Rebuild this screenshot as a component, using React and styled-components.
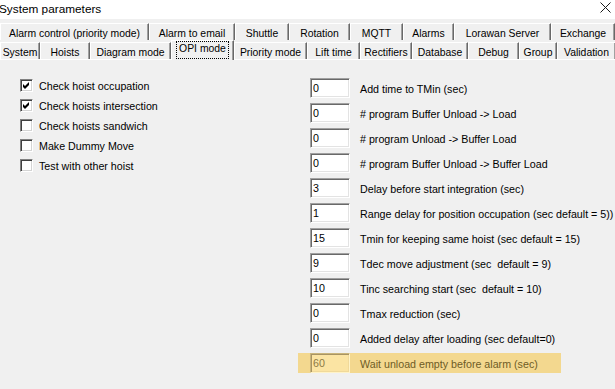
import React from "react"
import styled, { createGlobalStyle } from "styled-components"

const GlobalStyle = createGlobalStyle`
  html, body {
    margin: 0;
    padding: 0;
    background: #f0f0f0;
  }
  body {
    font-family: "Liberation Sans", Arial, sans-serif;
    font-size: 10.7px;
    color: #000;
  }
`

const topTabs = [
  ["Alarm control (priority mode)", 149],
  ["Alarm to email", 86],
  ["Shuttle", 54],
  ["Rotation", 61],
  ["MQTT", 53],
  ["Alarms", 51],
  ["Lorawan Server", 97],
  ["Exchange", 64],
]

const bottomTabs = [
  ["System", 40],
  ["Hoists", 50],
  ["Diagram mode", 81],
  ["OPI mode", 63, true],
  ["Priority mode", 73],
  ["Lift time", 53],
  ["Rectifiers", 52],
  ["Database", 56],
  ["Debug", 51],
  ["Group", 38],
  ["Validation", 59],
]

const checks = [
  ["Check hoist occupation", true],
  ["Check hoists intersection", true],
  ["Check hoists sandwich", false],
  ["Make Dummy Move", false],
  ["Test with other hoist", false],
]

const fields = [
  ["0", "Add time to TMin (sec)"],
  ["0", "# program Buffer Unload -> Load"],
  ["0", "# program Unload -> Buffer Load"],
  ["0", "# program Buffer Unload -> Buffer Load"],
  ["3", "Delay before start integration (sec)"],
  ["1", "Range delay for position occupation (sec default = 5))"],
  ["15", "Tmin for keeping same hoist (sec default = 15)"],
  ["9", "Tdec move adjustment (sec  default = 9)"],
  ["10", "Tinc searching start (sec  default = 10)"],
  ["0", "Tmax reduction (sec)"],
  ["0", "Added delay after loading (sec default=0)"],
  ["60", "Wait unload empty before alarm (sec)", true],
]

class App extends React.Component {
  render() {
    return (
      <Window>
        <GlobalStyle />
        <TitleBar>
          <Title>System parameters</Title>
          <Close width="11" height="11" viewBox="0 0 11 11">
            <path d="M0.5 0.5 L10.5 10.5 M10.5 0.5 L0.5 10.5" stroke="#1a1a1a" strokeWidth="1" fill="none" />
          </Close>
        </TitleBar>

        <TabStrip>
          <TabRow>
            {topTabs.map(([label, w]) => (
              <Tab key={label} w={w}>{label}</Tab>
            ))}
          </TabRow>
          <TabRow $bottom>
            {bottomTabs.map(([label, w, active]) => (
              <Tab key={label} w={w} $active={active}>
                {active ? <Focus>{label}</Focus> : label}
              </Tab>
            ))}
          </TabRow>
        </TabStrip>

        <Content>
          <Options>
            {checks.map(([label, on]) => (
              <CheckRow key={label}>
                <Box>
                  {on && (
                    <svg width="11" height="11" viewBox="0 0 11 11">
                      <path d="M2 4 L4 6 L8 2 L8 5 L4 9 L2 7 Z" fill="#000" />
                    </svg>
                  )}
                </Box>
                {label}
              </CheckRow>
            ))}
          </Options>

          <Fields>
            {fields.map(([value, label, hl]) => (
              <FieldRow key={label} $highlight={hl}>
                <Edit readOnly value={value} $highlight={hl} />
                <FieldLabel $highlight={hl}>{label}</FieldLabel>
              </FieldRow>
            ))}
          </Fields>
        </Content>
      </Window>
    )
  }
}

export default App

const Window = styled.div`
  width: 615px;
  height: 389px;
  overflow: hidden;
  background: #f0f0f0;
`

const TitleBar = styled.div`
  height: 19px;
  background: #fff;
  display: flex;
  align-items: center;
  justify-content: space-between;
  padding-right: 4px;
`

const Title = styled.div`
  font-size: 11.8px;
  margin-left: -1px;
  margin-top: -2px;
`

const Close = styled.svg`
  display: block;
  margin-top: -4px;
`

const TabStrip = styled.div`
  padding-top: 4px;
`

const TabRow = styled.div`
  display: flex;
  height: 17px;
  margin-top: ${p => (p.$bottom ? "2px" : "0")};
  border-bottom: ${p => (p.$bottom ? "1px solid #fff" : "none")};
  align-items: flex-start;
`

const Tab = styled.div`
  flex: none;
  width: ${p => p.w}px;
  height: ${p => (p.$active ? "20px" : "17px")};
  margin-top: ${p => (p.$active ? "-2px" : "0")};
  box-sizing: border-box;
  background: #f0f0f0;
  border-top: 1px solid #fff;
  border-left: 1px solid #fff;
  border-right: 1px solid #696969;
  box-shadow: inset -1px 0 #a0a0a0;
  display: flex;
  align-items: ${p => (p.$active ? "flex-start" : "center")};
  justify-content: center;
  padding-top: ${p => (p.$active ? "0" : "2px")};
  font-size: 10.4px;
  white-space: nowrap;
  position: relative;
`

const Focus = styled.span`
  border: 1px dotted #000;
  padding: 1px 2px 3px;
  line-height: 12px;
`

const Content = styled.div`
  display: flex;
`

const Options = styled.div`
  width: 270px;
  padding: 19px 0 0 20px;
  display: flex;
  flex-direction: column;
  gap: 7px;
`

const CheckRow = styled.div`
  display: flex;
  align-items: center;
  height: 13px;
  gap: 6px;
  white-space: nowrap;
`

const Box = styled.div`
  width: 13px;
  height: 13px;
  box-sizing: border-box;
  background: #fff;
  border-top: 1px solid #808080;
  border-left: 1px solid #808080;
  border-right: 1px solid #fff;
  border-bottom: 1px solid #fff;
  box-shadow: inset 1px 1px #404040, inset -1px -1px #d4d4d4;
  display: flex;
  svg {
    display: block;
  }
`

const Fields = styled.div`
  padding-top: 18px;
  margin-left: 20px;
  display: flex;
  flex-direction: column;
  gap: 5px;
`

const FieldRow = styled.div`
  display: flex;
  align-items: center;
  height: 20px;
  margin-left: -12px;
  padding-left: 12px;
  width: ${p => (p.$highlight ? "263px" : "auto")};
  box-sizing: border-box;
  background: ${p => (p.$highlight ? "#f3d88f" : "transparent")};
  white-space: nowrap;
`

const Edit = styled.input`
  width: 40px;
  height: 20px;
  box-sizing: border-box;
  margin: 0;
  padding: 0 0 0 2px;
  font: inherit;
  color: ${p => (p.$highlight ? "#8d7a45" : "#000")};
  background: ${p => (p.$highlight ? "#fbe4a3" : "#fff")};
  border-style: solid;
  border-width: 1px;
  border-color: ${p =>
    p.$highlight ? "#c9b47a #fff3c8 #fff3c8 #c9b47a" : "#a0a0a0 #fff #fff #a0a0a0"};
  box-shadow: ${p =>
    p.$highlight
      ? "inset 1px 1px #a89463, inset -1px -1px #f0d99a"
      : "inset 1px 1px #696969, inset -1px -1px #e3e3e3"};
  outline: none;
`

const FieldLabel = styled.span`
  margin-left: 10px;
  padding-top: 2px;
  white-space: pre;
  color: ${p => (p.$highlight ? "#6e5c26" : "#000")};
`
